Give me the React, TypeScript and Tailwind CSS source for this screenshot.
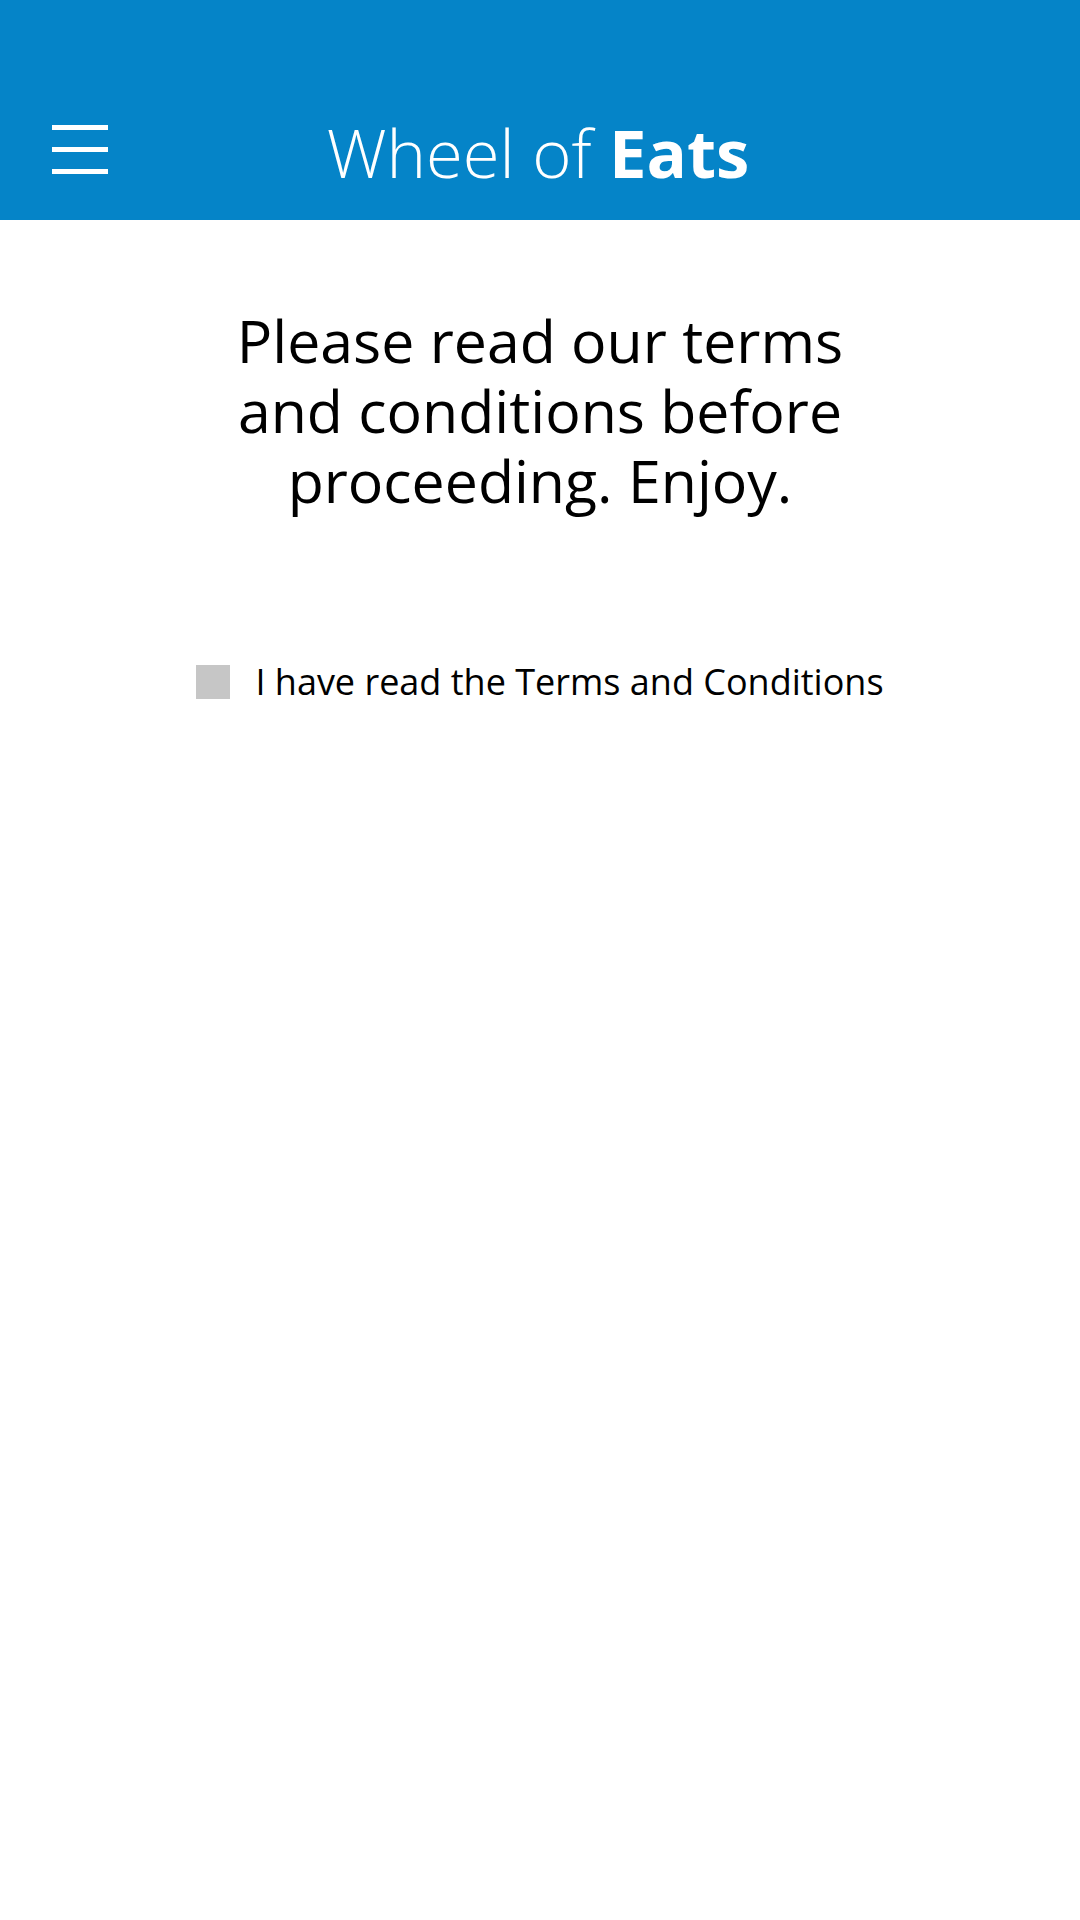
export default function App() {
  return (
    <div className="min-h-[1920px] w-full bg-white font-['Open_Sans',sans-serif] text-black">
      <header className="relative flex h-[220px] items-end justify-center bg-[#0584c8] pb-[34px]">
        <button className="absolute left-[52px] top-[125px] flex w-[56px] flex-col gap-[17px]" aria-label="Menu">
          <span className="block h-[5px] w-full bg-white" />
          <span className="block h-[5px] w-full bg-white" />
          <span className="block h-[5px] w-full bg-white" />
        </button>
        <h1 className="pr-[4px] text-[67px] leading-none text-white">
          <span className="font-light">Wheel of </span>
          <span className="font-bold">Eats</span>
        </h1>
      </header>

      <main className="flex flex-col items-center">
        <h2 className="mt-[85px] max-w-[700px] text-center text-[59px] font-normal leading-[70px]">
          Please read our terms and conditions before proceeding. Enjoy.
        </h2>

        <label className="mt-[140px] flex items-center gap-[25px]">
          <span className="block h-[34px] w-[34px] bg-[#c6c6c6]" />
          <span className="text-[36px]">I have read the Terms and Conditions</span>
        </label>
      </main>
    </div>
  );
}
